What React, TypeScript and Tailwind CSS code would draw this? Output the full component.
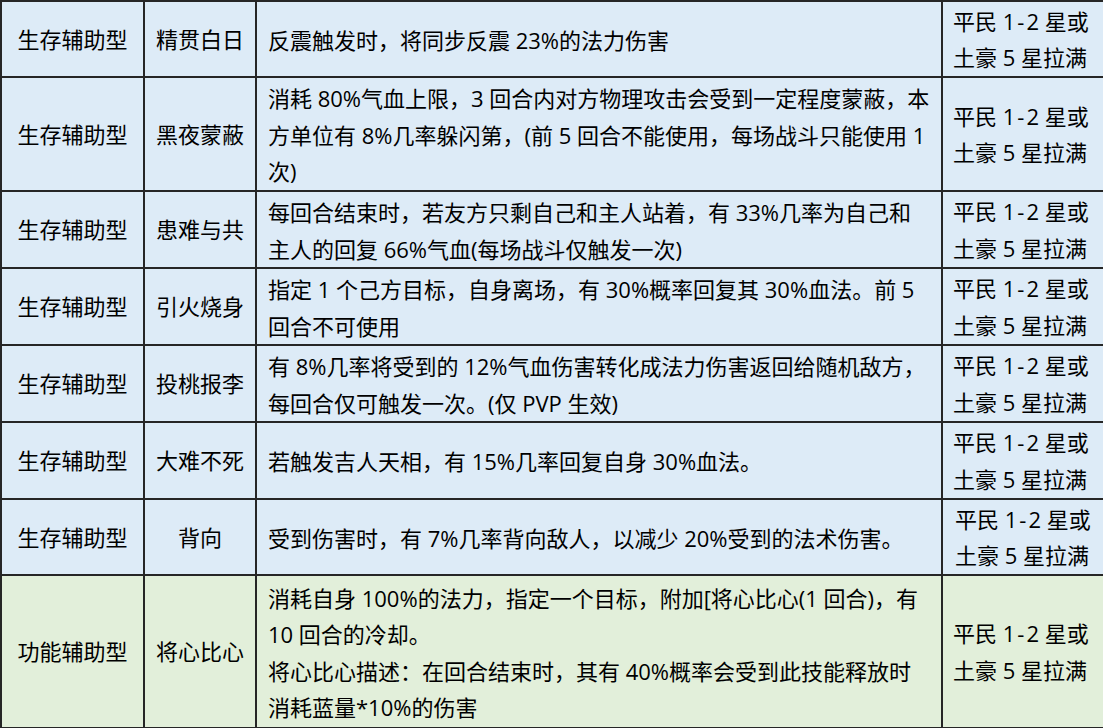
import React from "react";

type Row = {
  type: string;
  name: string;
  desc: string[];
  green?: boolean;
  h: string;
  p4?: string;
};

const rows: Row[] = [
  { type: "生存辅助型", name: "精贯白日", desc: ["反震触发时，将同步反震 23%的法力伤害"], h: "h-[76px]" },
  {
    type: "生存辅助型",
    name: "黑夜蒙蔽",
    desc: [
      "消耗 80%气血上限，3 回合内对方物理攻击会受到一定程度蒙蔽，本",
      "方单位有 8%几率躲闪第，(前 5 回合不能使用，每场战斗只能使用 1",
      "次)",
    ],
    h: "h-[114px]",
  },
  {
    type: "生存辅助型",
    name: "患难与共",
    desc: ["每回合结束时，若友方只剩自己和主人站着，有 33%几率为自己和", "主人的回复 66%气血(每场战斗仅触发一次)"],
    h: "h-[76px]",
  },
  {
    type: "生存辅助型",
    name: "引火烧身",
    desc: ["指定 1 个己方目标，自身离场，有 30%概率回复其 30%血法。前 5", "回合不可使用"],
    h: "h-[77px]",
  },
  {
    type: "生存辅助型",
    name: "投桃报李",
    desc: ["有 8%几率将受到的 12%气血伤害转化成法力伤害返回给随机敌方，", "每回合仅可触发一次。(仅 PVP 生效)"],
    h: "h-[76px]",
  },
  { type: "生存辅助型", name: "大难不死", desc: ["若触发吉人天相，有 15%几率回复自身 30%血法。"], h: "h-[77px]" },
  {
    type: "生存辅助型",
    name: "背向",
    desc: ["受到伤害时，有 7%几率背向敌人，以减少 20%受到的法术伤害。"],
    h: "h-[76px]",
    p4: "pl-[12px]",
  },
  {
    type: "功能辅助型",
    name: "将心比心",
    desc: [
      "消耗自身 100%的法力，指定一个目标，附加[将心比心(1 回合)，有",
      "10 回合的冷却。",
      "将心比心描述：在回合结束时，其有 40%概率会受到此技能释放时",
      "消耗蓝量*10%的伤害",
    ],
    green: true,
    h: "h-[153px]",
  },
];

export default function App() {
  return (
    <div
      className="w-[1103px] h-[728px] overflow-hidden bg-[#2b2b2b] text-[22px] leading-[36.5px] text-black"
      style={{ fontFamily: '"Open Sans", "Noto Sans CJK SC", sans-serif' }}
    >
      <table className="w-[1103px] table-fixed border-collapse border-2 border-[#262626]">
        <colgroup>
          <col className="w-[143px]" />
          <col className="w-[112px]" />
          <col className="w-[686px]" />
          <col className="w-[162px]" />
        </colgroup>
        <tbody>
          {rows.map((r, i) => (
            <tr key={i} className={`${r.h} ${r.green ? "bg-[#e2efda]" : "bg-[#ddebf7]"}`}>
              <td className="border-2 border-[#262626] text-center align-middle p-0 whitespace-nowrap">{r.type}</td>
              <td className="border-2 border-[#262626] text-center align-middle p-0 whitespace-nowrap">{r.name}</td>
              <td className="border-2 border-[#262626] align-middle pl-[11px] pr-1 pt-[2px] pb-0 whitespace-nowrap">
                {r.desc.map((l, j) => (
                  <div key={j}>{l}</div>
                ))}
              </td>
              <td className={`border-2 border-[#262626] align-middle ${r.p4 ?? "pl-[10px]"} py-0 whitespace-nowrap`}>
                <div>
                  平民 1<span className="mx-[2px]">-</span>2 星或
                </div>
                <div>土豪 5 星拉满</div>
              </td>
            </tr>
          ))}
        </tbody>
      </table>
    </div>
  );
}
